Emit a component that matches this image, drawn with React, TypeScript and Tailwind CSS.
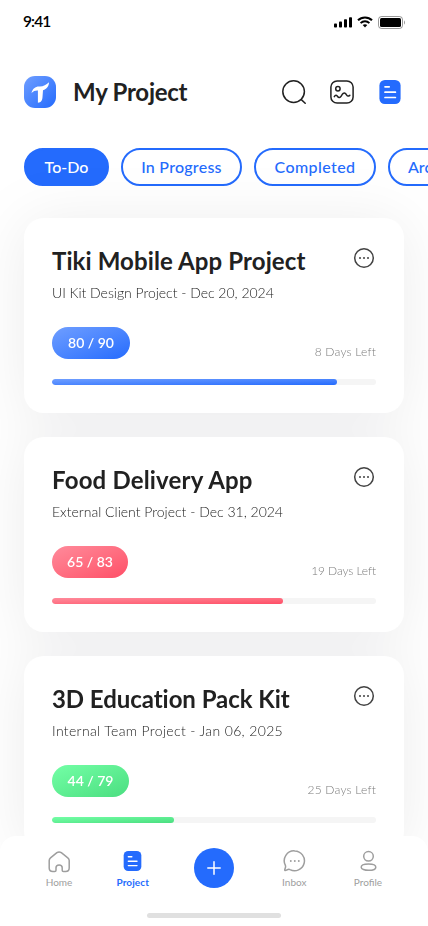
import React from "react";

const FONT = "font-['Lato','Noto_Sans',sans-serif]";

type Project = {
  title: string;
  titleTracking: string;
  detail: string;
  detailTracking: string;
  count: string;
  countWidth: string;
  left: string;
  leftTracking: string;
  fill: string;
  bar: string;
};

const projects: Project[] = [
  {
    title: "Tiki Mobile App Project",
    titleTracking: "tracking-[0.11px]",
    detail: "UI Kit Design Project - Dec 20, 2024",
    detailTracking: "tracking-[-0.02px]",
    count: "80 / 90",
    countWidth: "w-[78px]",
    left: "8 Days Left",
    leftTracking: "tracking-[0.2px]",
    fill: "from-[#6f9eff] to-[#246bfd]",
    bar: "w-[285px]",
  },
  {
    title: "Food Delivery App",
    titleTracking: "tracking-[0.18px]",
    detail: "External Client Project - Dec 31, 2024",
    detailTracking: "tracking-normal",
    count: "65 / 83",
    countWidth: "w-[76px]",
    left: "19 Days Left",
    leftTracking: "tracking-[-0.1px]",
    fill: "from-[#ff8a9b] to-[#ff4d67]",
    bar: "w-[231px]",
  },
  {
    title: "3D Education Pack Kit",
    titleTracking: "tracking-[-0.05px]",
    detail: "Internal Team Project - Jan 06, 2025",
    detailTracking: "tracking-[0.35px]",
    count: "44 / 79",
    countWidth: "w-[77px]",
    left: "25 Days Left",
    leftTracking: "tracking-[0.2px]",
    fill: "from-[#73ffa6] to-[#4ade80]",
    bar: "w-[122px]",
  },
];

function DocumentIcon({ className }: { className: string }) {
  return (
    <svg viewBox="0 0 22 24" className={className} fill="none">
      <rect x="0.4" y="0" width="21.2" height="24" rx="5.5" fill="#246bfd" />
      <path d="M6 6.8h4.2M6 12.2h10.4M6 17.5h10.4" stroke="#fff" strokeWidth="1.7" strokeLinecap="round" />
    </svg>
  );
}

function StatusBar() {
  return (
    <div className="flex h-11 items-center justify-between pl-[23px] pr-[23px]">
      <span className="text-[15.5px] leading-none font-semibold tracking-[-0.9px] text-black">9:41</span>
      <div className="flex items-center">
        <svg viewBox="0 0 18 11" className="h-[11px] w-[18px]" fill="#000">
          <rect x="0" y="6.5" width="3" height="4" rx="0.8" />
          <rect x="5" y="4.5" width="3" height="6" rx="0.8" />
          <rect x="10" y="2.3" width="3" height="8.2" rx="0.8" />
          <rect x="15" y="0.2" width="3" height="10.3" rx="0.8" />
        </svg>
        <svg viewBox="0 0 16 12" className="ml-[5px] h-3 w-4" fill="none" stroke="#000" strokeWidth="2">
          <path d="M1 4.300C4.800.4 11.200.4 15 4.300" />
          <path d="M3.600 7.100c2.500-2.400 6.300-2.400 8.800 0" />
          <path d="M8 11.400 5.700 9.100c1.300-1.200 3.300-1.200 4.600 0z" fill="#000" stroke="none" />
        </svg>
        <svg viewBox="0 0 27 13" className="ml-[5px] h-[13px] w-[27px]" fill="none">
          <rect x="0.500" y="0.500" width="24" height="12" rx="3" stroke="#000" strokeOpacity="0.4" />
          <rect x="2" y="2" width="21" height="9" rx="1.500" fill="#000" />
          <path d="M26 4.500c1.300.7 1.300 3.300 0 4z" fill="#000" fillOpacity="0.4" />
        </svg>
      </div>
    </div>
  );
}

function Header() {
  return (
    <header className="mt-8 flex h-8 items-center pl-6 pr-[27px]">
      <svg viewBox="0 0 32 32" className="size-8">
        <defs>
          <linearGradient id="logo" x1="1" y1="1" x2="0" y2="0">
            <stop stopColor="#246bfd" />
            <stop offset="1" stopColor="#6f9eff" />
          </linearGradient>
        </defs>
        <rect width="32" height="32" rx="11" fill="url(#logo)" />
        <path d="M7.500 17C8.500 12.500 11.500 10.300 15.500 10.500C19.500 10.600 22 8.600 25 6.200C24.900 10 22.700 13.200 19 14.200L18.500 21C18.300 24.500 17.200 26.300 13.900 26.800V14.500C11.500 14.300 9.300 15.100 7.500 17Z" fill="#fff" />
      </svg>
      <h1 className="ml-[17px] text-2xl leading-none font-bold tracking-[-0.25px] whitespace-nowrap text-[#212121]">My Project</h1>
      <div className="ml-auto flex items-center">
        <svg viewBox="0 0 24 24" className="size-6" fill="none" stroke="#212121" strokeWidth="1.500" strokeLinecap="round">
          <circle cx="11.600" cy="11.600" r="10.800" />
          <path d="m19.300 19.600 3.900 3.700" />
        </svg>
        <svg viewBox="0 0 24 24" className="ml-6 size-6" fill="none" stroke="#212121" strokeWidth="1.500" strokeLinecap="round" strokeLinejoin="round">
          <rect x="0.900" y="0.900" width="22.200" height="22.200" rx="6.200" />
          <circle cx="7.900" cy="8.700" r="2.200" />
          <path d="M4.300 16.700c1.200-2.100 2.500-1.400 3.300-.2 1.100 1.700 2.500 1.300 3.600-.4 1.300-2.100 2.700-4.200 4.500-2.300 1 1.100 1.300 2.300 2.400 2.300.7 0 1.200-.4 1.700-.8" />
        </svg>
        <DocumentIcon className="ml-[25px] h-6 w-[22px]" />
      </div>
    </header>
  );
}

function Tabs() {
  const base = "flex h-[38px] shrink-0 items-center rounded-full border-2 border-[#246bfd] text-base font-medium whitespace-nowrap ";
  return (
    <div className="mt-10 flex gap-3 overflow-hidden pl-6">
      <button className={base + "w-[85px] justify-center bg-[#246bfd] text-white"}>To-Do</button>
      <button className={base + "w-[121px] justify-center tracking-[0.25px] text-[#246bfd]"}>In Progress</button>
      <button className={base + "w-[122px] justify-center tracking-[0.4px] text-[#246bfd]"}>Completed</button>
      <button className={base + "w-[106px] pl-[18px] text-[#246bfd]"}>Archived</button>
    </div>
  );
}

function ProjectCard({ p }: { p: Project }) {
  return (
    <article className="h-[195px] shrink-0 rounded-[20px] bg-white p-7">
      <div className="flex items-start justify-between">
        <h2 className={"text-2xl leading-[30px] font-bold whitespace-nowrap text-[#212121] " + p.titleTracking}>{p.title}</h2>
        <svg viewBox="0 0 24 24" className="size-6 shrink-0" fill="none">
          <circle cx="12" cy="12" r="9.300" stroke="#424242" strokeWidth="1.500" />
          <path d="M8 12h.01M12 12h.01M16 12h.01" stroke="#424242" strokeWidth="2" strokeLinecap="round" />
        </svg>
      </div>
      <p className={"mt-2 text-sm leading-[18px] font-light whitespace-nowrap text-[#1c1c1c] " + p.detailTracking}>{p.detail}</p>
      <div className="mt-[25px] flex h-8 items-end justify-between">
        <span className={"flex h-8 items-center justify-center rounded-full bg-linear-to-br text-sm font-semibold text-white " + p.fill + " " + p.countWidth}>{p.count}</span>
        <span className={"text-xs leading-[15px] font-light whitespace-nowrap text-[#7c7c7c] " + p.leftTracking}>{p.left}</span>
      </div>
      <div className="mt-5 h-1.5 overflow-hidden rounded-full bg-[#f5f5f5]">
        <div className={"h-full rounded-full bg-linear-to-br " + p.fill + " " + p.bar} />
      </div>
    </article>
  );
}

function NavItem({ label, active, children }: { label: string; active?: boolean; children: React.ReactNode }) {
  return (
    <div className="flex w-[50px] flex-col items-center">
      <div className="flex h-6 items-center justify-center">{children}</div>
      <span className={"mt-[3px] text-[10px] leading-3 whitespace-nowrap " + (active ? "font-bold tracking-[0.1px] text-[#246bfd]" : "text-[#9e9e9e]")}>{label}</span>
    </div>
  );
}

function BottomNav() {
  return (
    <nav className="relative z-10 h-[90px] shrink-0 rounded-t-2xl bg-white">
      <div className="flex h-[65px] items-start justify-between pt-[13px] pl-[34px] pr-[35px]">
        <NavItem label="Home">
          <svg viewBox="0 0 22 23" className="h-[23px] w-[22px]" fill="none" stroke="#9e9e9e" strokeWidth="1.500" strokeLinejoin="round">
            <path d="M8 20.300v-2.500c0-3.800 6.200-3.800 6.200 0v2.500c0 .8.500 1.300 1.300 1.300h2.100c2.200 0 3.600-1.400 3.600-3.500v-7.600c0-1.100-.5-2-1.400-2.700l-6.500-5.100c-1.500-1.100-2.900-1.100-4.400 0L2.500 7.800C1.600 8.500 1.200 9.400 1.200 10.500v7.600c0 2.100 1.400 3.500 3.600 3.500h1.900c.8 0 1.300-.5 1.300-1.300Z" />
          </svg>
        </NavItem>
        <NavItem label="Project" active>
          <DocumentIcon className="h-5 w-[19px]" />
        </NavItem>
        <div className="mx-3 -mt-px flex size-10 shrink-0 items-center justify-center rounded-full bg-[#246bfd]">
          <svg viewBox="0 0 14 14" className="size-3.5" fill="none" stroke="#fff" strokeWidth="1.500" strokeLinecap="round">
            <path d="M7 .8v12.400M.8 7h12.400" />
          </svg>
        </div>
        <NavItem label="Inbox">
          <svg viewBox="0 0 24 24" className="size-6" fill="none" stroke="#9e9e9e" strokeWidth="1.500" strokeLinecap="round" strokeLinejoin="round">
            <path d="M12.800 1.900A9.900 9.900 0 1 1 8 20.600c-.7-.4-1.300-.4-2-.1l-2.200.9c-.8.3-1.200-.1-1-.9l.7-2.300c.2-.7.100-1.200-.1-1.800A9.900 9.900 0 0 1 12.800 1.900Z" />
            <path d="M8.800 12h.01M12.800 12h.01M16.800 12h.01" strokeWidth="1.900" />
          </svg>
        </NavItem>
        <NavItem label="Profile">
          <svg viewBox="0 0 20 22" className="h-[22px] w-5" fill="none" stroke="#9e9e9e" strokeWidth="1.500">
            <circle cx="10.500" cy="6.300" r="4.800" />
            <path d="M3.200 17.200c0-4.200 14.600-4.200 14.600 0s-14.600 4.200-14.600 0Z" />
          </svg>
        </NavItem>
      </div>
      <div className="mx-auto mt-3 h-[5px] w-[134px] rounded-full bg-[#e0e0e0]" />
    </nav>
  );
}

export default function App() {
  return (
    <div className={"flex h-[926px] w-[428px] flex-col overflow-hidden bg-white " + FONT}>
      <StatusBar />
      <Header />
      <Tabs />
      <main className="mt-8 flex min-h-0 flex-1 flex-col gap-6 px-6 drop-shadow-[0_4px_30px_rgba(4,6,15,0.075)]">
        {projects.map((p) => (
          <ProjectCard key={p.title} p={p} />
        ))}
      </main>
      <BottomNav />
    </div>
  );
}
